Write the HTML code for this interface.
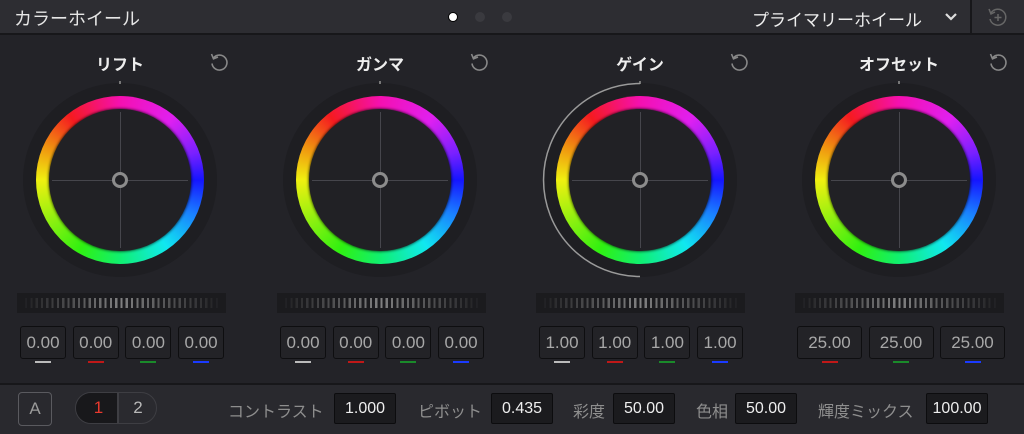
<!DOCTYPE html>
<html><head><meta charset="utf-8"><style>
*{margin:0;padding:0;box-sizing:border-box}
body{width:1024px;height:434px;overflow:hidden;background:#232328;font-family:"Liberation Sans","Noto Sans CJK JP",sans-serif;position:relative;color:#ddd}
.abs{position:absolute}
.hdr{left:0;top:0;width:1024px;height:35px;background:#2d2d32;border-bottom:2px solid #17171a}
.title{left:14px;top:5px;font-size:18px;color:#e6e6e6}
.dot{width:10px;height:10px;border-radius:50%;top:12px;background:#3a3a3f}
.lbl{font-size:16px;font-weight:bold;color:#eee;top:51px;text-align:center;width:120px}
.outer{width:194px;height:194px;border-radius:50%;background:#1e1e22}
.ring{width:168px;height:168px;border-radius:50%;background:conic-gradient(from 0deg,#f510b0 0deg,#e020f0 40deg,#7a20ff 70deg,#1515ff 90deg,#1a80ff 115deg,#10e8f0 145deg,#10f070 180deg,#30f010 210deg,#a0f010 245deg,#f0f010 270deg,#f09010 295deg,#f51a20 322deg,#f510b0 360deg)}
.inner{width:142px;height:142px;border-radius:50%;background:#212125;box-shadow:0 0 3px #000}
.h{height:1px;width:136px;background:#46464c}
.v{width:1px;height:136px;background:#46464c}
.c{width:16px;height:16px;border-radius:50%;border:3px solid #8c8c8c}
.sl{height:20px;width:209px;top:293px;background:#1b1b1e}
.tk{left:8px;right:8px;top:5px;height:10px;background:repeating-linear-gradient(90deg,#9a9a9a 0 2.2px,transparent 2.2px 5.3px);-webkit-mask-image:linear-gradient(90deg,rgba(0,0,0,.05),rgba(0,0,0,.8) 50%,rgba(0,0,0,.05));mask-image:linear-gradient(90deg,rgba(0,0,0,.05),rgba(0,0,0,.8) 50%,rgba(0,0,0,.05))}
.box{top:326px;height:33px;background:#232327;border:1px solid #0e0e10;border-radius:3px;color:#a8a8a8;font-size:17px;text-align:center;line-height:31px}
.ul{top:361px;height:2px;width:16px}
.bot{left:0;top:383px;width:1024px;height:51px;background:#29292e;border-top:2px solid #17171a}
.bl{font-size:16px;color:#8e8e8e;top:398px}
.bb{top:393px;height:31px;background:#1b1b1e;border:1px solid #0c0c0e;border-radius:2px;color:#eee;font-size:16px;text-align:center;line-height:29px}
</style></head><body>
<div class="abs hdr"></div>
<div class="abs title">カラーホイール</div>
<div class="abs dot" style="left:448px;background:#fff;border:1px solid #000"></div>
<div class="abs dot" style="left:475px"></div>
<div class="abs dot" style="left:502px"></div>
<div class="abs" style="left:752px;top:6px;font-size:17px;color:#eee">プライマリーホイール</div>
<svg class="abs" style="left:944px;top:12px" width="14" height="10"><path d="M2 2 L7 7 L12 2" stroke="#ddd" stroke-width="2.2" fill="none"/></svg>
<div class="abs" style="left:970px;top:0;width:2px;height:35px;background:#17171a"></div>
<svg class="abs" style="left:986px;top:6px" width="22" height="22" viewBox="0 0 22 22"><path d="M5 7 A8 8 0 1 1 4 13" stroke="#666" stroke-width="1.5" fill="none"/><path d="M3 3 L5 8 L9 6" stroke="#666" stroke-width="1.5" fill="none"/><path d="M12 8v7M8.5 11.5h7" stroke="#666" stroke-width="1.5"/></svg>

<div id="w"></div>

<div class="abs bot"></div>
<div class="abs" style="left:18px;top:392px;width:34px;height:34px;border:1.5px solid #5a5a5f;border-radius:4px;color:#9a9a9a;font-size:17px;text-align:center;line-height:31px">A</div>
<div class="abs" style="left:75px;top:392px;width:82px;height:32px;border:1.5px solid #3e3e43;border-radius:16px;overflow:hidden;background:#2a2a2f">
<div class="abs" style="left:0;top:0;width:41px;height:30px;background:#18181b;color:#e8392e;font-size:17px;text-align:center;line-height:30px;padding-left:4px">1</div>
<div class="abs" style="left:41px;top:0;width:1.5px;height:30px;background:#3e3e43"></div>
<div class="abs" style="left:42px;top:0;width:40px;height:30px;color:#b8b8b8;font-size:17px;text-align:center;line-height:30px">2</div></div>
<div class="abs bl" style="left:228px">コントラスト</div><div class="abs bb" style="left:334px;width:62px">1.000</div>
<div class="abs bl" style="left:418px">ピボット</div><div class="abs bb" style="left:491px;width:62px">0.435</div>
<div class="abs bl" style="left:573px">彩度</div><div class="abs bb" style="left:613px;width:62px">50.00</div>
<div class="abs bl" style="left:696px">色相</div><div class="abs bb" style="left:735px;width:62px">50.00</div>
<div class="abs bl" style="left:818px">輝度ミックス</div><div class="abs bb" style="left:926px;width:62px">100.00</div>

<script>
var W=[[120,"リフト",17,[["0.00","#bbb"],["0.00","#c01818"],["0.00","#1a8a2a"],["0.00","#1a3aff"]],20,46,52.7],
[380,"ガンマ",277,[["0.00","#bbb"],["0.00","#c01818"],["0.00","#1a8a2a"],["0.00","#1a3aff"]],280,46,52.7],
[640,"ゲイン",536,[["1.00","#bbb"],["1.00","#c01818"],["1.00","#1a8a2a"],["1.00","#1a3aff"]],539,46,52.7],
[899,"オフセット",795,[["25.00","#c01818"],["25.00","#1a8a2a"],["25.00","#1a3aff"]],797,65,71.5]];
var h="";
W.forEach(function(w,i){var x=w[0],y=180;
h+='<div class="abs lbl" style="left:'+(x-60)+'px">'+w[1]+'</div>';
h+='<svg class="abs" style="left:'+(x+88)+'px;top:51px" width="22" height="22" viewBox="0 0 22 22"><path d="M5.5 7 A7.5 7.5 0 1 1 4 12.5" stroke="#888" stroke-width="1.6" fill="none"/><path d="M3.5 3 L5.5 7.8 L10 6" stroke="#888" stroke-width="1.6" fill="none"/></svg>';
h+='<div class="abs outer" style="left:'+(x-97)+'px;top:'+(y-97)+'px"></div>';
h+='<div class="abs" style="left:'+(x-1)+'px;top:81px;width:2px;height:3px;background:#777"></div>';
if(i==2)h+='<svg class="abs" style="left:'+(x-98)+'px;top:'+(y-98)+'px" width="196" height="196"><path d="M98 1.5 A96.5 96.5 0 0 0 98 194.5" stroke="#9a9a9a" stroke-width="1.5" fill="none"/></svg>';
h+='<div class="abs ring" style="left:'+(x-84)+'px;top:'+(y-84)+'px"></div>';
h+='<div class="abs inner" style="left:'+(x-71)+'px;top:'+(y-71)+'px"></div>';
h+='<div class="abs h" style="left:'+(x-68)+'px;top:'+y+'px"></div><div class="abs v" style="left:'+x+'px;top:'+(y-68)+'px"></div>';
h+='<div class="abs c" style="left:'+(x-8)+'px;top:'+(y-8)+'px;background:#212125"></div>';
h+='<div class="abs sl" style="left:'+w[2]+'px"><div class="abs tk"></div></div>';
w[3].forEach(function(b,j){var bx=w[4]+j*w[6];
h+='<div class="abs box" style="left:'+bx+'px;width:'+w[5]+'px">'+b[0]+'</div>';
h+='<div class="abs ul" style="left:'+(bx+w[5]/2-8)+'px;background:'+b[1]+'"></div>';});
});
document.getElementById("w").innerHTML=h;
</script>
</body></html>
